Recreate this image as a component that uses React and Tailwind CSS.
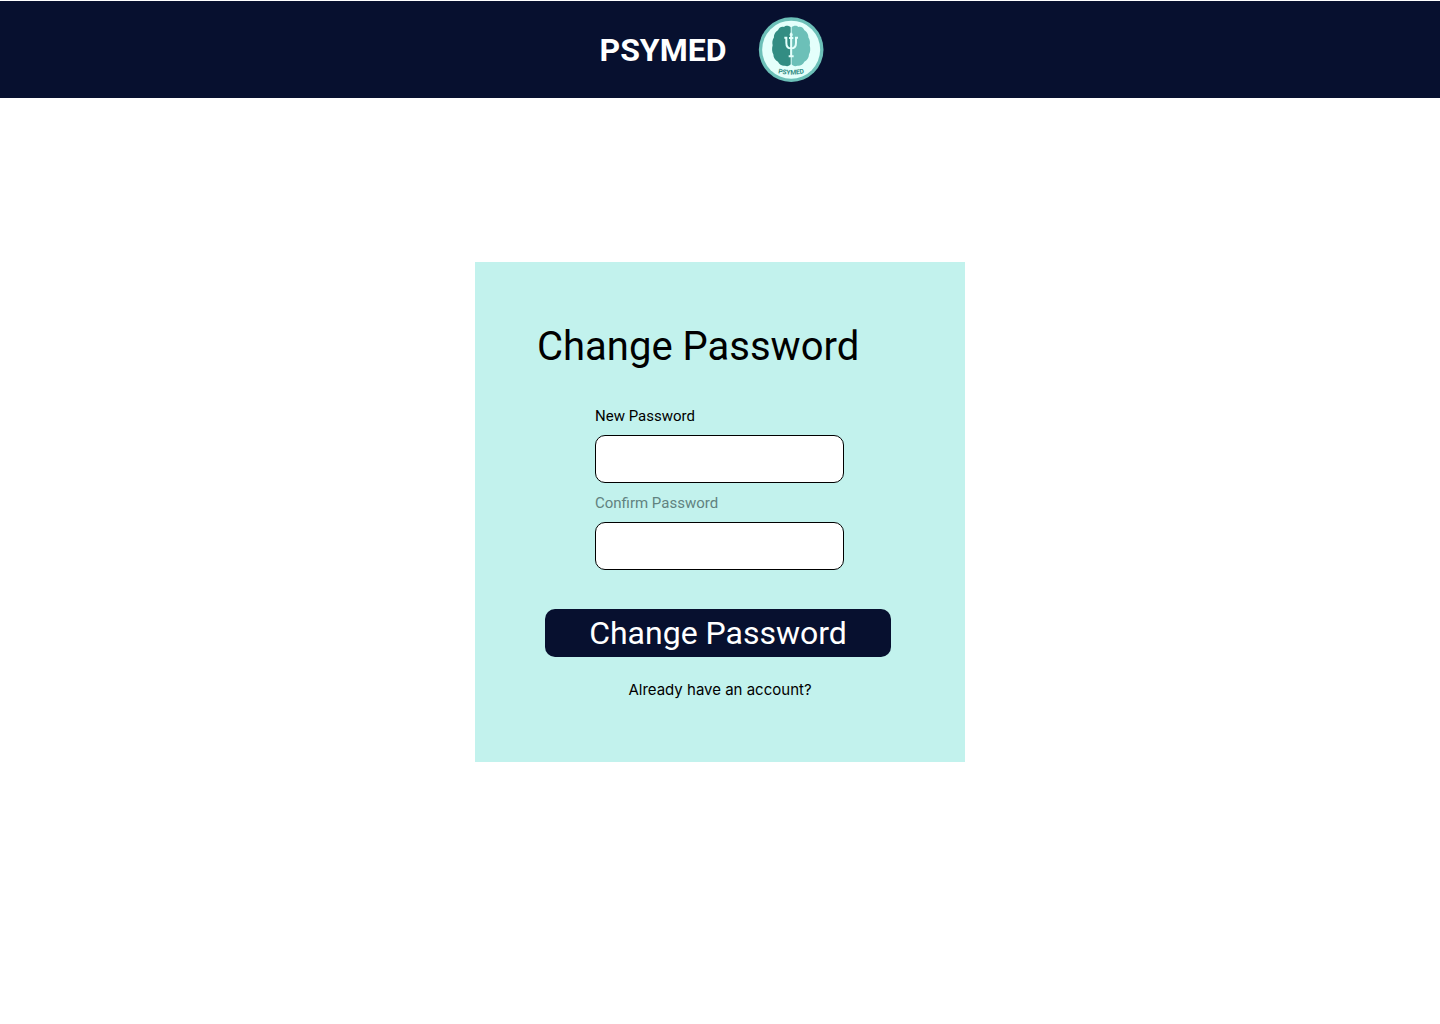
function Logo() {
  return (
    <svg viewBox="24 21 198 198" className="size-[66px]" role="img" aria-label="Psymed logo">
      <circle cx="123.500" cy="119" r="97" fill="#6cc0b8" />
      <circle cx="123.500" cy="119" r="87" fill="#e4fffb" />
      <path
        d="M122 52 C117 46 106 46 102 51 C94 48 86 54 84 61 C77 65 71 74 72 82 C67 89 66 99 68 106 C65 115 66 127 70 133 C70 143 76 152 84 155 C88 164 98 169 105 167 C111 170 119 168 122 163 Z"
        fill="#328d83"
      />
      <path
        d="M125 52 C130 46 141 46 145 51 C153 48 161 54 163 61 C170 65 176 74 175 82 C180 89 181 99 179 106 C182 115 181 127 177 133 C177 143 171 152 163 155 C159 164 149 169 142 167 C136 170 128 168 125 163 Z"
        fill="#6cc0b8"
      />
      <path
        d="M103 83 H112 M135 83 H144 M109 82 V98 C109 110 114 115 123 115 C133 115 138 110 138 98 V82 M117 84 H130 M119 74 H128 M123.500 68 V142 M116 139 H131"
        fill="none"
        stroke="#e4fffb"
        strokeWidth="6"
      />
      <path id="logo-name" d="M82 189 Q123 199 165 189" fill="none" />
      <text
        fill="#328d83"
        fontFamily="Roboto, sans-serif"
        fontSize="20"
        fontWeight="700"
        textAnchor="middle"
      >
        <textPath href="#logo-name" startOffset="50%">
          PSYMED
        </textPath>
      </text>
    </svg>
  );
}

function PasswordField({ id, label, labelClass }) {
  return (
    <div className="flex flex-col gap-[7px]">
      <label htmlFor={id} className={`text-[15px] leading-6 ${labelClass}`}>
        {label}
      </label>
      <input
        id={id}
        type="password"
        className="h-12 w-full rounded-[10px] border border-black bg-white px-3"
      />
    </div>
  );
}

export default function App() {
  return (
    <div className="min-h-screen bg-white font-[Roboto,sans-serif] text-black">
      <header className="flex items-center justify-center gap-8 border-t border-white bg-[#07102f] pt-4 pr-4 pb-[15px]">
        <span className="text-[32px] leading-10 font-bold text-white">PSYMED</span>
        <Logo />
      </header>
      <main className="flex justify-center px-4 py-41">
        <form className="w-full max-w-[490px] bg-[#c2f2ed] px-[62px] py-15">
          <h1 className="text-[40px] leading-[50px]">Change Password</h1>
          <div className="mt-8 ml-[58px] flex max-w-[249px] flex-col gap-2">
            <PasswordField id="new-password" label="New Password" labelClass="text-black" />
            <PasswordField id="confirm-password" label="Confirm Password" labelClass="text-[#618280]" />
          </div>
          <button
            type="submit"
            className="mt-[39px] ml-2 block h-12 w-full max-w-[346px] rounded-[10px] bg-[#07102f] text-[32px] leading-10 text-white"
          >
            Change Password
          </button>
          <p className="mt-[21px] text-center">
            <a href="#sign-in" className="font-[Inter,sans-serif] text-[15px] leading-6">
              Already have an account?
            </a>
          </p>
        </form>
      </main>
    </div>
  );
}
